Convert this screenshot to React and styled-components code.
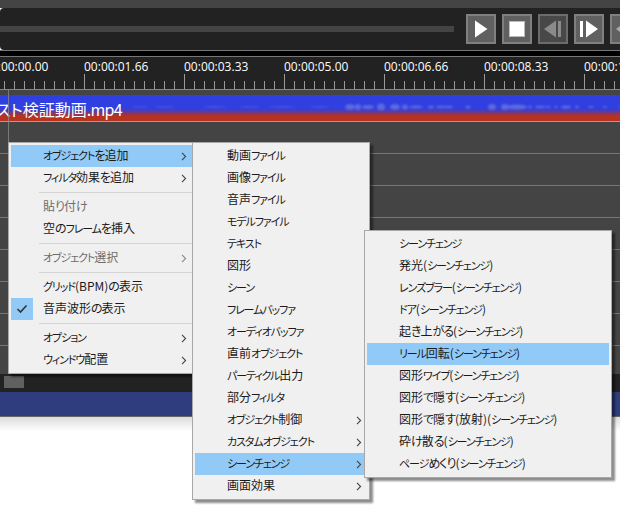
import React from "react";
import styled, { createGlobalStyle } from "styled-components";

const Global = createGlobalStyle`
  html, body { margin: 0; padding: 0; background: #fff; overflow: hidden; }
  #root { width: 620px; height: 506px; }
`;

const Page = styled.div`
  position: relative;
  width: 620px;
  height: 506px;
  overflow: hidden;
  background: #fff;
  display: flex;
  flex-direction: column;
  font-family: "Noto Sans CJK JP", "Noto Sans", sans-serif;
`;
const TopEdge = styled.div`height: 8px; background: #444;`;
const Transport = styled.div`
  height: 42px;
  background: #222;
  border-radius: 4px 0 0 4px;
  display: flex;
  align-items: center;
  box-sizing: border-box;
`;
const Seek = styled.div`
  width: 454px;
  height: 6px;
  background: #444;
  margin-right: 12px;
  flex: none;
`;
const Buttons = styled.div`display: flex; gap: 6px; flex: none;`;
const PlayerBtn = styled.div`
  width: 30px;
  height: 30px;
  box-sizing: border-box;
  flex: none;
  border: 2px solid ${(p) => (p.$off ? "#6c6c6c" : "#808080")};
  background: ${(p) => (p.$off ? "#484848" : "#606060")};
  display: flex;
  align-items: center;
  justify-content: center;
`;
const Rule = styled.div`height: 1px; background: ${(p) => p.$c || "#777"};`;
const BlackStrip = styled.div`height: 5px; background: #000;`;
const Ruler = styled.div`
  height: 32px;
  background: #222;
  overflow: hidden;
  position: relative;
`;
const Labels = styled.div`display: flex; margin-left: -16px; height: 17px;`;
const TimeLabel = styled.div`
  flex: 0 0 100px;
  font: 12px/14px "Open Sans", sans-serif;
  color: #fff;
  padding-top: 3px;
`;
const Ticks = styled.div`display: flex; margin-left: -16px; height: 15px; align-items: flex-end;`;
const Tick = styled.div`
  flex: 0 0 10px;
  height: ${(p) => (p.$major ? 15 : 8)}px;
  box-sizing: border-box;
  border-left: 1px solid #999;
`;
const TrackGap = styled.div`height: 5px; background: #444;`;
const Track = styled.div`
  height: 26px;
  position: relative;
  overflow: hidden;
  background: linear-gradient(#2f3fe0 0, #2f3fe0 14px, #b7321f 21px, #b7321f 26px);
`;
const TrackName = styled.div`
  position: absolute;
  left: -4px;
  top: 1px;
  font: 16px/26px "Noto Sans CJK JP", sans-serif;
  font-feature-settings: "palt";
  color: #fff;
  white-space: nowrap;
`;
const TrackExt = styled.span`letter-spacing: -0.7px;`;
const Wave = styled.svg`position: absolute; left: 0; top: 0;`;
const Rows = styled.div`
  flex: 0 0 252px;
  background: #444;
  display: flex;
  flex-direction: column;
`;
const RowLine = styled.div`height: 31px; border-bottom: 1px solid #777;`;
const Scrollbar = styled.div`
  height: 18px;
  background: #222;
  padding: 2px 0 0 4px;
  box-sizing: border-box;
`;
const Thumb = styled.div`width: 20px; height: 12px; background: #606060;`;
const BlueBand = styled.div`
  height: 25px;
  box-sizing: border-box;
  background: #2f3c7e;
  border-bottom: 1px solid #666;
`;
const Fade = styled.div`
  height: 14px;
  background: linear-gradient(#dcdcdc, #fff);
`;
const Cursor = styled.div`
  position: absolute;
  left: 8px;
  top: 90px;
  width: 1px;
  height: 52px;
  background: rgba(140, 140, 140, 0.75);
`;
const Menu = styled.div`
  position: absolute;
  left: ${(p) => p.$x}px;
  top: ${(p) => p.$y}px;
  width: ${(p) => p.$w}px;
  box-sizing: border-box;
  padding: 2px;
  background: #f0f0f0;
  border: 1px solid #a8a8a8;
  box-shadow: 3px 3px 2px rgba(0, 0, 0, 0.45);
  color: #000;
  font-size: 12px;
  font-feature-settings: "palt";
`;
const Item = styled.div`
  height: 22px;
  box-sizing: border-box;
  padding: 0 0 2px 32px;
  position: relative;
  white-space: nowrap;
  line-height: 20px;
  background: ${(p) => (p.$hot ? "#91c9f7" : "transparent")};
  color: ${(p) => (p.$dim ? "#6d6d6d" : "#1a1a1a")};
`;
const Kata = styled.span`font-size: 11px; letter-spacing: -1.1px;`;
const Hira = styled.span`letter-spacing: -1px;`;
const Chevron = styled.svg`position: absolute; right: 5px; top: 7px;`;
const CheckBox = styled.div`
  position: absolute;
  left: 0;
  top: 0;
  width: 22px;
  height: 22px;
  background: #91c9f7;
  display: flex;
  align-items: center;
  justify-content: center;
`;
const Sep = styled.div`
  height: 7px;
  margin-left: 28px;
  display: flex;
  align-items: center;
  &::after { content: ""; flex: 1; height: 1px; background: #d4d4d4; }
`;

const times = ["00:00:00.00", "00:00:01.66", "00:00:03.33", "00:00:05.00", "00:00:06.66", "00:00:08.33", "00:00:10.00"];
const tickList = Array.from({ length: 66 }, (_, i) => i);

const waveBlobs = [
  [350, 5, 3], [358, 3, 3], [368, 6, 2], [381, 4, 3.5], [395, 5, 3], [405, 3, 2.5], [416, 7, 1.5], [431, 3, 1.5],
  [441, 5, 1.2], [449, 4, 1.2], [468, 2.5, 1.5], [492, 4, 3], [505, 4, 3],
  [517, 10, 2.5], [530, 2, 1.2], [540, 5, 1.2], [548, 3, 1], [556, 2, 1], [566, 5, 1.5], [577, 2, 1.2], [591, 3, 1],
  [605, 2, 1], [620, 1, 1],
];
const waveFaint = [[140, 8, 1], [165, 10, 1], [215, 12, 1.2], [250, 10, 1], [282, 14, 1.2], [320, 10, 1.2]];

const menu1 = [
  { t: "オブジェクトを追加", hot: true, sub: true },
  { t: "フィルタ効果を追加", sub: true },
  { sep: true },
  { t: "貼り付け", dim: true },
  { t: "空のフレームを挿入" },
  { sep: true },
  { t: "オブジェクト選択", dim: true, sub: true },
  { sep: true },
  { t: "グリッド(BPM)の表示" },
  { t: "音声波形の表示", check: true },
  { sep: true },
  { t: "オプション", sub: true },
  { t: "ウィンドウ配置", sub: true },
];
const menu2 = [
  { t: "動画ファイル" }, { t: "画像ファイル" }, { t: "音声ファイル" }, { t: "モデルファイル" },
  { t: "テキスト" }, { t: "図形" }, { t: "シーン" }, { t: "フレームバッファ" },
  { t: "オーディオバッファ" }, { t: "直前オブジェクト" }, { t: "パーティクル出力" }, { t: "部分フィルタ" },
  { t: "オブジェクト制御", sub: true }, { t: "カスタムオブジェクト", sub: true },
  { t: "シーンチェンジ", sub: true, hot: true }, { t: "画面効果", sub: true },
];
const menu3 = [
  { t: "シーンチェンジ" }, { t: "発光(シーンチェンジ)" }, { t: "レンズブラー(シーンチェンジ)" },
  { t: "ドア(シーンチェンジ)" }, { t: "起き上がる(シーンチェンジ)" },
  { t: "リール回転(シーンチェンジ)", hot: true }, { t: "図形ワイプ(シーンチェンジ)" },
  { t: "図形で隠す(シーンチェンジ)" }, { t: "図形で隠す(放射)(シーンチェンジ)" },
  { t: "砕け散る(シーンチェンジ)" }, { t: "ページめくり(シーンチェンジ)" },
];

function Label({ text }) {
  const parts = text.match(/[\u30A0-\u30FF]+|[\u3040-\u309F]+|[^\u3040-\u30FF]+/g) || [];
  return parts.map((s, i) => {
    if (/^[\u30A0-\u30FF]/.test(s)) return <Kata key={i}>{s}</Kata>;
    if (/^[\u3040-\u309F]/.test(s)) return <Hira key={i}>{s}</Hira>;
    return <span key={i}>{s}</span>;
  });
}

function MenuList({ items, ...rest }) {
  return (
    <Menu {...rest}>
      {items.map((it, i) =>
        it.sep ? (
          <Sep key={i} />
        ) : (
          <Item key={i} $hot={it.hot} $dim={it.dim}>
            {it.check && (
              <CheckBox>
                <svg width="12" height="10" viewBox="0 0 12 10">
                  <path d="M1.5 5 L4.5 8 L10.5 1.5" fill="none" stroke="#333" strokeWidth="1.6" />
                </svg>
              </CheckBox>
            )}
            <Label text={it.t} />
            {it.sub && (
              <Chevron width="6" height="9" viewBox="0 0 6 9">
                <path d="M1 0.8 L4.6 4.5 L1 8.2" fill="none" stroke={it.dim ? "#888" : "#444"} strokeWidth="1.1" />
              </Chevron>
            )}
          </Item>
        )
      )}
    </Menu>
  );
}

export default function App() {
  return (
    <Page>
      <Global />
      <TopEdge />
      <Transport>
        <Seek />
        <Buttons>
          <PlayerBtn>
            <svg width="14" height="18" viewBox="0 0 14 18"><path d="M1 0.5 L13.5 9 L1 17.5 Z" fill="#fff" /></svg>
          </PlayerBtn>
          <PlayerBtn>
            <svg width="16" height="16" viewBox="0 0 16 16"><rect width="16" height="16" fill="#bbb" /><rect x="1" y="1" width="14" height="14" fill="#fff" /></svg>
          </PlayerBtn>
          <PlayerBtn $off>
            <svg width="20" height="18" viewBox="0 0 20 18"><path d="M13 0.5 L1 9 L13 17.5 Z M15 1 H18 V17 H15 Z" fill="#8a8a8a" /></svg>
          </PlayerBtn>
          <PlayerBtn>
            <svg width="20" height="18" viewBox="0 0 20 18"><path d="M1 1 H4 V17 H1 Z" fill="#fff" /><path d="M7 0.5 L19 9 L7 17.5 Z" fill="#fff" /></svg>
          </PlayerBtn>
          <PlayerBtn>
            <svg width="20" height="18" viewBox="0 0 20 18"><path d="M10 2 L1 9 L10 16 Z" fill="#aaa" /></svg>
          </PlayerBtn>
        </Buttons>
      </Transport>
      <Rule />
      <BlackStrip />
      <Rule />
      <Ruler>
        <Labels>{times.map((t) => <TimeLabel key={t}>{t}</TimeLabel>)}</Labels>
        <Ticks>{tickList.map((i) => <Tick key={i} $major={i % 10 === 0} />)}</Ticks>
      </Ruler>
      <Rule $c="#888" />
      <TrackGap />
      <Track>
        <Wave width="620" height="26" viewBox="0 0 620 26">
          <defs><filter id="b"><feGaussianBlur stdDeviation="1" /></filter></defs>
          <g filter="url(#b)" fill="#7f86dc" opacity="0.6">
            {waveBlobs.map(([x, rx, ry], i) => <ellipse key={i} cx={x} cy="12" rx={rx} ry={ry} />)}
          </g>
          <g filter="url(#b)" fill="#4e5ae0" opacity="0.7">
            {waveFaint.map(([x, rx, ry], i) => <ellipse key={i} cx={x} cy="12" rx={rx} ry={ry} />)}
          </g>
        </Wave>
        <TrackName>スト検証動画<TrackExt>.mp4</TrackExt></TrackName>
      </Track>
      <Rule $c="#a0a0a0" />
      <Rows>
        {Array.from({ length: 7 }, (_, i) => <RowLine key={i} />)}
      </Rows>
      <Scrollbar><Thumb /></Scrollbar>
      <BlueBand />
      <Fade />
      <Cursor />
      <MenuList items={menu1} $x={8} $y={142} $w={187} />
      <MenuList items={menu2} $x={192} $y={142} $w={178} />
      <MenuList items={menu3} $x={364} $y={230} $w={248} />
    </Page>
  );
}
